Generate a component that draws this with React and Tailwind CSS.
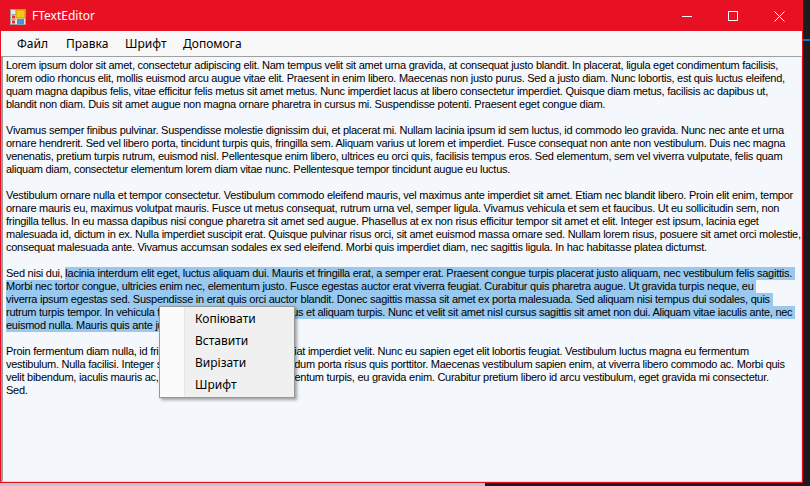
import React from 'react'

const p1 = [
  'Lorem ipsum dolor sit amet, consectetur adipiscing elit. Nam tempus velit sit amet urna gravida, at consequat justo blandit. In placerat, ligula eget condimentum facilisis,',
  'lorem odio rhoncus elit, mollis euismod arcu augue vitae elit. Praesent in enim libero. Maecenas non justo purus. Sed a justo diam. Nunc lobortis, est quis luctus eleifend,',
  'quam magna dapibus felis, vitae efficitur felis metus sit amet metus. Nunc imperdiet lacus at libero consectetur imperdiet. Quisque diam metus, facilisis ac dapibus ut,',
  'blandit non diam. Duis sit amet augue non magna ornare pharetra in cursus mi. Suspendisse potenti. Praesent eget congue diam.',
]

const p2 = [
  'Vivamus semper finibus pulvinar. Suspendisse molestie dignissim dui, et placerat mi. Nullam lacinia ipsum id sem luctus, id commodo leo gravida. Nunc nec ante et urna',
  'ornare hendrerit. Sed vel libero porta, tincidunt turpis quis, fringilla sem. Aliquam varius ut lorem et imperdiet. Fusce consequat non ante non vestibulum. Duis nec magna',
  'venenatis, pretium turpis rutrum, euismod nisl. Pellentesque enim libero, ultrices eu orci quis, facilisis tempus eros. Sed elementum, sem vel viverra vulputate, felis quam',
  'aliquam diam, consectetur elementum lorem diam vitae nunc. Pellentesque tempor tincidunt augue eu luctus.',
]

const p3 = [
  'Vestibulum ornare nulla et tempor consectetur. Vestibulum commodo eleifend mauris, vel maximus ante imperdiet sit amet. Etiam nec blandit libero. Proin elit enim, tempor',
  'ornare mauris eu, maximus volutpat mauris. Fusce ut metus consequat, rutrum urna vel, semper ligula. Vivamus vehicula et sem et faucibus. Ut eu sollicitudin sem, non',
  'fringilla tellus. In eu massa dapibus nisi congue pharetra sit amet sed augue. Phasellus at ex non risus efficitur tempor sit amet et elit. Integer est ipsum, lacinia eget',
  'malesuada id, dictum in ex. Nulla imperdiet suscipit erat. Quisque pulvinar risus orci, sit amet euismod massa ornare sed. Nullam lorem risus, posuere sit amet orci molestie,',
  'consequat malesuada ante. Vivamus accumsan sodales ex sed eleifend. Morbi quis imperdiet diam, nec sagittis ligula. In hac habitasse platea dictumst.',
]

// selected paragraph: [plain prefix, selected part]
const p4 = [
  ['Sed nisi dui, ', 'lacinia interdum elit eget, luctus aliquam dui. Mauris et fringilla erat, a semper erat. Praesent congue turpis placerat justo aliquam, nec vestibulum felis sagittis. '],
  ['', 'Morbi nec tortor congue, ultricies enim nec, elementum justo. Fusce egestas auctor erat viverra feugiat. Curabitur quis pharetra augue. Ut gravida turpis neque, eu '],
  ['', 'viverra ipsum egestas sed. Suspendisse in erat quis orci auctor blandit. Donec sagittis massa sit amet ex porta malesuada. Sed aliquam nisi tempus dui sodales, quis '],
  ['', 'rutrum turpis tempor. In vehicula felis mi tristique, sit amet finibus et aliquam turpis. Nunc et velit sit amet nisl cursus sagittis sit amet non dui. Aliquam vitae iaculis ante, nec '],
  ['', 'euismod nulla. Mauris quis ante justo.'],
]

const p5 = [
  'Proin fermentum diam nulla, id fringilla ligulae tincidunt ut, feugiat imperdiet velit. Nunc eu sapien eget elit lobortis feugiat. Vestibulum luctus magna eu fermentum',
  'vestibulum. Nulla facilisi. Integer sit amet nunc, vel dictum interdum porta risus quis porttitor. Maecenas vestibulum sapien enim, at viverra libero commodo ac. Morbi quis',
  'velit bibendum, iaculis mauris ac, pharetra nisl, aenean ut fermentum turpis, eu gravida enim. Curabitur pretium libero id arcu vestibulum, eget gravida mi consectetur.',
  'Sed.',
]

const Line = ({ children }) => (
  <div className="h-[13px] leading-[13px] whitespace-pre">{children}</div>
)

const Para = ({ lines }) => (
  <div className="mb-[13px]">
    {lines.map((l, i) => <Line key={i}>{l}</Line>)}
  </div>
)

const AppIcon = () => (
  <svg width="16" height="16" viewBox="0 0 16 16">
    <rect x="0.5" y="0.5" width="15" height="15" fill="#e9e9e9" stroke="#9c9c9c" />
    <line x1="0.5" y1="5.5" x2="6" y2="5.5" stroke="#b0b0b0" />
    <line x1="0.5" y1="10.5" x2="6" y2="10.5" stroke="#b0b0b0" />
    <rect x="6" y="1" width="9" height="8" fill="#f5c518" stroke="#c79a00" />
    <rect x="7" y="10" width="7" height="5" fill="#4a8fe0" />
    <rect x="2" y="6.5" width="3" height="3" fill="#d9342b" />
    <rect x="2" y="11.5" width="3" height="3" fill="#d9342b" />
  </svg>
)

export default function App() {
  return (
    <div className="w-[810px] h-[486px] bg-[#1b1b1b] flex flex-col overflow-hidden">
      <div className="flex">
        <div className="w-[803px] h-[483px] border border-[#e81123] flex flex-col bg-[#e81123] relative">
          {/* title bar */}
          <div className="h-[30px] flex items-center text-white font-['Noto_Sans',sans-serif] text-[12px]">
            <div className="ml-[9px] mt-[1px]"><AppIcon /></div>
            <span className="ml-[6px]">FTextEditor</span>
            <div className="ml-auto flex items-center h-full">
              <div className="w-[46px] h-full flex items-center justify-center">
                <div className="w-[10px] h-px bg-white" />
              </div>
              <div className="w-[46px] h-full flex items-center justify-center">
                <div className="w-[10px] h-[10px] border border-white" />
              </div>
              <div className="w-[46px] h-full flex items-center justify-center">
                <svg width="11" height="11" viewBox="0 0 11 11">
                  <path d="M0.5 0.5 L10.5 10.5 M10.5 0.5 L0.5 10.5" stroke="white" strokeWidth="1" />
                </svg>
              </div>
            </div>
          </div>

          {/* menu bar */}
          <div className="h-[25px] bg-[#f8f8f8] flex items-center pl-[16px] text-[12px] text-black font-['Noto_Sans',sans-serif]">
            <span className="w-[49px]">Файл</span>
            <span className="w-[59px]">Правка</span>
            <span className="w-[58px]">Шрифт</span>
            <span>Допомога</span>
          </div>

          {/* text box */}
          <div className="flex-1 bg-[#f4f7fc] border-t border-[#a0a0a0] border-l-2 border-l-[#9c9c9c] border-r border-r-[#d8d8e0] border-b border-b-[#d8d8e0] pl-[3px] pt-[2px] text-[11px] tracking-[-0.26px] text-black font-['Liberation_Sans',Arial,sans-serif] overflow-hidden">
            <Para lines={p1} />
            <Para lines={p2} />
            <Para lines={p3} />
            <div className="mb-[13px]">
              {p4.map(([a, b], i) => (
                <Line key={i}>
                  {a}
                  <span className="inline-block h-[13px] bg-[#99c9ef]">{b}</span>
                </Line>
              ))}
            </div>
            <Para lines={p5} />
          </div>

          {/* context menu */}
          <div className="absolute left-[158px] top-[305px] w-[136px] h-[92px] bg-[#f0f0f0] border border-[#979797] shadow-[2px_2px_3px_rgba(0,0,0,0.35)] flex font-['Noto_Sans',sans-serif] text-[12px] text-black">
            <div className="w-[25px] bg-[#fbfbfb] border-r border-[#e6e6e6]" />
            <div className="flex flex-col pt-[1px] pl-[10px]">
              {['Копіювати', 'Вставити', 'Вирізати', 'Шрифт'].map(t => (
                <div key={t} className="h-[22px] flex items-center">{t}</div>
              ))}
            </div>
          </div>
        </div>
        <div className="flex-1 relative">
          <div className="mt-[39px] h-[2px] bg-[#0078d7]" />
        </div>
      </div>
      <div className="flex h-[3px]">
        <div className="w-[485px] bg-[#c4c7cb]" />
      </div>
    </div>
  )
}
